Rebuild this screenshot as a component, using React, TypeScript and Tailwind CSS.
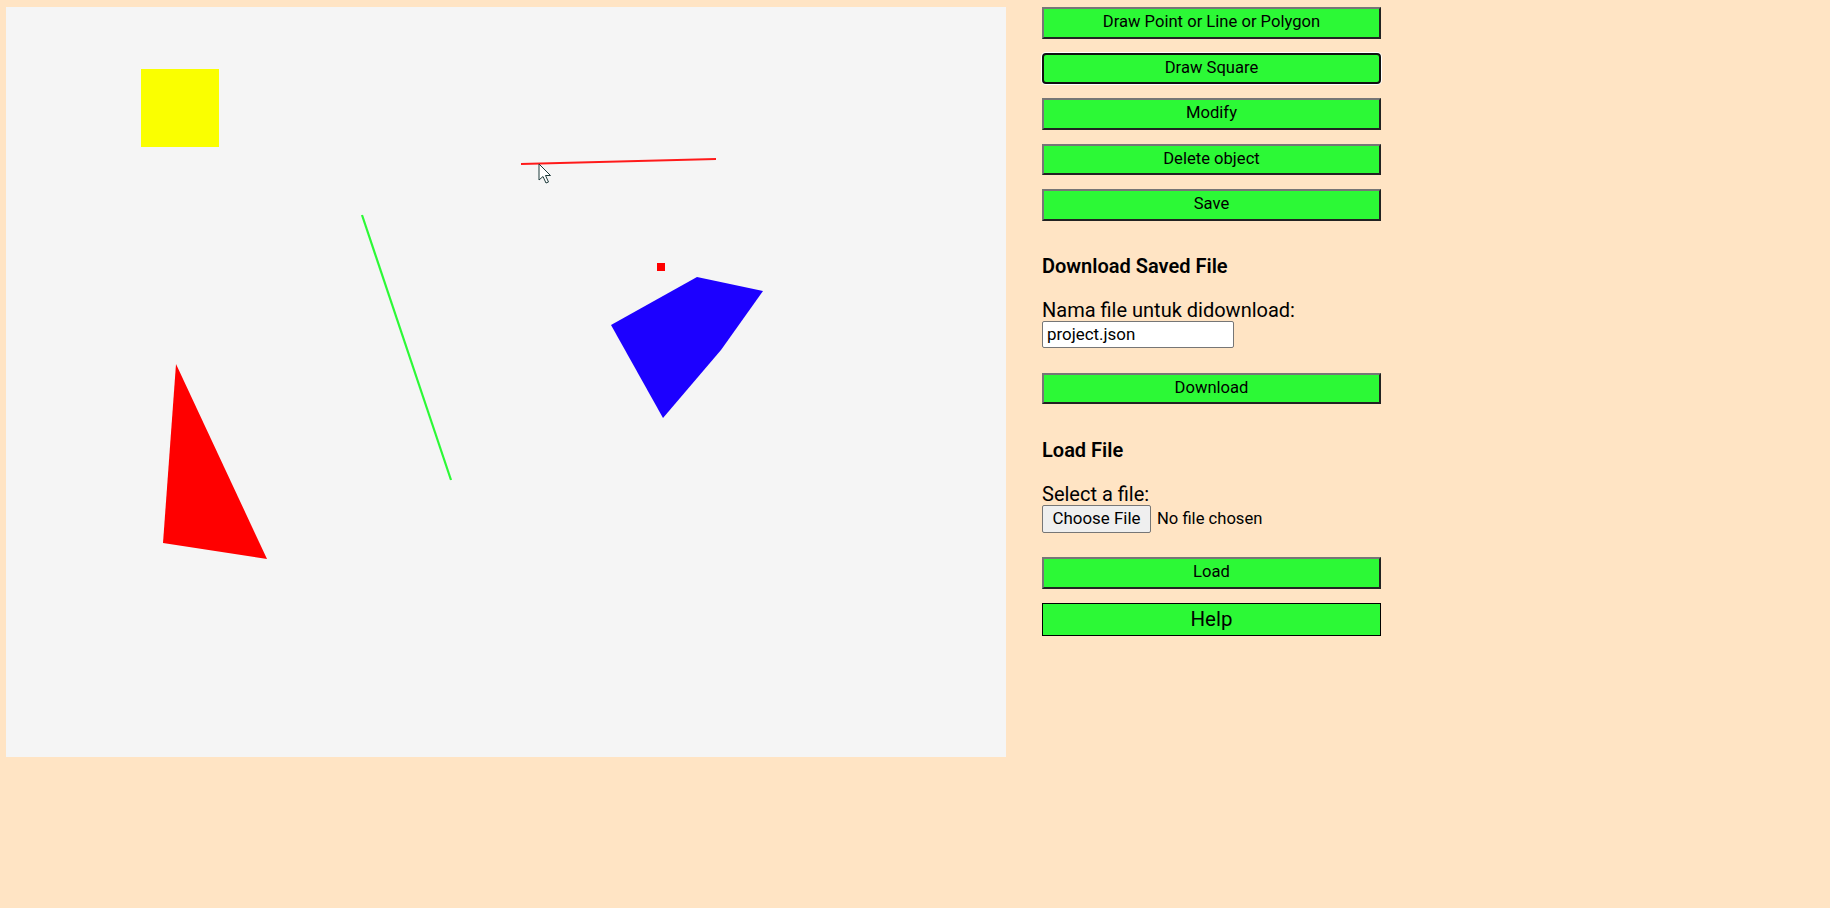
const tombol = [
  "Draw Point or Line or Polygon",
  "Draw Square",
  "Modify",
  "Delete object",
  "Save",
];

// tombol hijau dengan border outset bawaan browser
const hijau =
  "w-full h-[31.5px] bg-[#2cf936] text-[16.6px] leading-none text-black border-2 border-t-[#767676] border-l-[#767676] border-b-[#222] border-r-[#222]";

function Kanvas() {
  return (
    <svg width={1000} height={750} viewBox="0 0 1000 750" className="block shrink-0 bg-[#f5f5f5]">
      <rect x={135} y={62} width={78} height={78} fill="#faff00" />
      <line x1={515} y1={157} x2={710} y2={152} stroke="#ff1a1a" strokeWidth={2} />
      <line x1={356} y1={208} x2={445} y2={473} stroke="#2cf936" strokeWidth={2.2} />
      <rect x={651} y={256} width={8} height={8} fill="#ff0000" />
      <polygon points="605,318 691,270 757,284 715,343 657,411" fill="#1c00ff" />
      <polygon points="170,357 157,536 261,552" fill="#ff0000" />
      {/* kursor mouse */}
      <path
        d="M533 157 L533 173 L537 169.5 L540 176 L542.5 175 L539.5 168.5 L544.5 168.5 Z"
        fill="#ffffff"
        stroke="#1d3a3a"
        strokeWidth={1}
        strokeLinejoin="round"
      />
    </svg>
  );
}

export default function App() {
  return (
    <div className="min-h-screen w-full bg-[#ffe4c4] font-['Roboto',sans-serif] text-black">
      <div className="flex items-start pt-[7px] pl-[6px] gap-[36px]">
        <Kanvas />

        <div className="w-[339px] flex flex-col">
          <div className="flex flex-col gap-[14px]">
            {tombol.map((t, i) =>
              i === 1 ? (
                <button
                  key={t}
                  className="w-full h-[31.5px] bg-[#2cf936] text-[16.6px] leading-none text-black border-2 border-[#101010] rounded-[4px] shadow-[0_0_0_1px_#ffffff]"
                >
                  {t}
                </button>
              ) : (
                <button key={t} className={hijau}>
                  {t}
                </button>
              )
            )}
          </div>

          <h3 className="mt-[34px] text-[20px] leading-[22px] font-semibold">Download Saved File</h3>
          <label className="mt-[23px] block text-[20px] leading-[21px]">Nama file untuk didownload:</label>
          <input
            defaultValue="project.json"
            className="w-[192px] h-[27px] bg-white border border-[#767676] rounded-[2px] px-[4px] text-[16.9px] text-black outline-none"
          />

          <button className={hijau + " mt-[25px]"}>Download</button>

          <h3 className="mt-[35px] text-[20px] leading-[22px] font-semibold">Load File</h3>
          <div className="mt-[23px] text-[20px] leading-[21px]">Select a file:</div>
          <label className="flex items-center gap-[6px] h-[28px] text-[16.6px]">
            <span className="h-[28px] w-[109px] flex items-center justify-center bg-[#efefef] border border-[#767676] rounded-[2px] text-[16.9px]">
              Choose File
            </span>
            <span>No file chosen</span>
            <input type="file" className="hidden" />
          </label>

          <button className={hijau + " mt-[24px]"}>Load</button>
          <button className="mt-[14px] w-full h-[33px] bg-[#2cf936] text-[20.5px] leading-none text-black border border-black">
            Help
          </button>
        </div>
      </div>
    </div>
  );
}
